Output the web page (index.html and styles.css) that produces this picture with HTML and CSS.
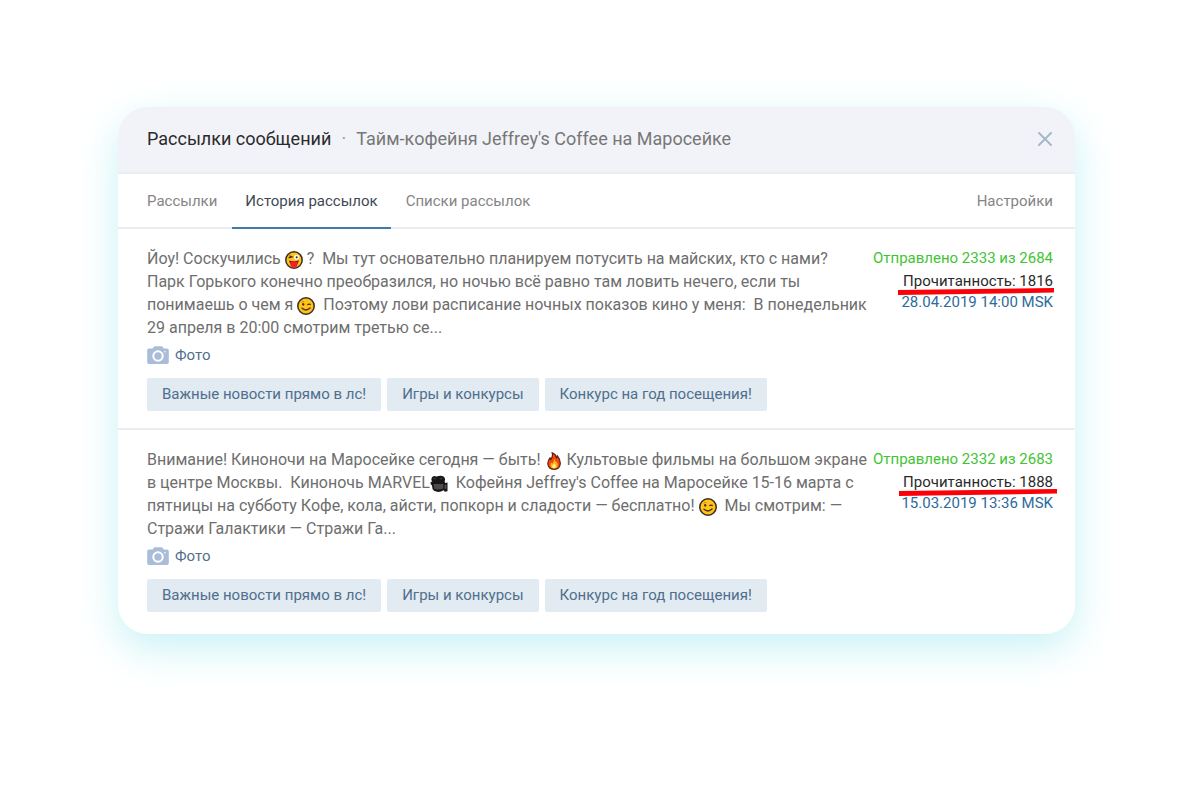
FILE: index.html
```html
<!DOCTYPE html>
<html lang="ru">
<head>
<meta charset="utf-8">
<title>Рассылки сообщений</title>
<link rel="stylesheet" href="styles.css">
</head>
<body>
<svg class="defs" aria-hidden="true">
  <symbol id="wink" viewBox="0 0 18 18">
    <circle cx="9" cy="9" r="8.2" fill="#ffc31a" stroke="#3b2f22" stroke-width="1.5"/>
    <path d="M4.6 5.200q1.200-1.200 2.600-.5" stroke="#c98a00" fill="none"/>
    <ellipse cx="6.200" cy="7.300" rx="1.100" ry="1.400" fill="#4a3210"/>
    <path d="M10.300 7.800q1.600-1.400 3.400-.2" stroke="#4a3210" stroke-width="1.300" fill="none"/>
    <path d="M5 11.300q4 3.400 8-.3" stroke="#4a3210" stroke-width="1.400" fill="none" stroke-linecap="round"/>
  </symbol>
  <symbol id="tongue" viewBox="0 0 18 18">
    <circle cx="9" cy="9" r="8.200" fill="#ffc31a" stroke="#3b2f22" stroke-width="1.500"/>
    <path d="M3.600 6.800l3.400-.9-2.600-1" stroke="#4a3210" stroke-width="1.200" fill="none"/>
    <circle cx="11.600" cy="6.200" r="2.500" fill="#fff"/>
    <circle cx="11.700" cy="6.300" r="1.100" fill="#4a3210"/>
    <path d="M4 9.500q5 1.600 10-.3-.6 3-2.300 4.200H6Q4.400 12 4 9.500z" fill="#5e2110"/>
    <path d="M5.300 10.800q3.700-1 7.200 0v3q-.6 2.900-3.500 2.900T5.300 13.800z" fill="#f3202b"/>
  </symbol>
  <symbol id="fire" viewBox="0 0 18 18">
    <path d="M7.200.8q3.600 1.400 4.300 5 .8-.6.900-1.800 3 3.600 2.900 7.500-.3 5.700-6.200 5.800-6-.2-6.300-5.800Q2.900 8.300 5 5.800l.7 1.700Q8.300 4.600 7.200.8z" fill="#f04a12" stroke="#5a2210" stroke-width="1.200"/>
    <path d="M9.300 6.500q.4 2.300 2.400 3.800 1.500 1.700 1 3.900-.9 2.200-3.600 2.300-3.200-.2-3.700-2.800-.1-1.900 1-3.200l.9 1.300q1.900-2.200 2-5.300z" fill="#ffb31a"/>
    <path d="M9.200 11.500q2.200 1.900 1.700 3.500-.8 1.300-1.900 1.200-1.700-.2-1.800-1.600.2-1.700 2-3.100z" fill="#fff27a"/>
  </symbol>
  <symbol id="movie" viewBox="0 0 18 18">
    <path d="M1.500 3.500Q2.500.6 5.500 1.200 7 1.800 8.500 1q3-.8 5 .6 2.300 1.700 1.200 4.400l.3 2 2.500-.5v8.800l-2.800.5-1-1.500q-5 3-9.700.5Q2 14 2 10.500L.6 9V7l1.700-.6Q1 5.300 1.500 3.500z" fill="#171717"/>
    <path d="M3.500 9h9.800v4.500q-4.500 2-9 .2z" fill="#4b4b4d"/>
    <path d="M3.300 3.600l1.500-1 1.400 1-1.400 1.200zM9.300 3.600l2-1 1.500 1-1.700 1.200z" fill="#38383a"/>
    <path d="M14.600 10l1.800-.5v4l-1.800.8z" fill="#555"/>
    <path d="M11 10.500l1.600-.3-.2 1.700z" fill="#e8261c"/>
  </symbol>
  <symbol id="camera" viewBox="0 0 22 18">
    <path d="M2 2.500h3.700L6.800.8Q7.200.2 8 .2h6.400q.8 0 1.200.6l1.100 1.700H20q1.800 0 1.800 1.800v11.900Q21.800 18 20 18H2Q.2 18 .2 16.200V4.300Q.2 2.500 2 2.500z" fill="#a9bdd9"/>
    <circle cx="11" cy="10" r="4.700" fill="none" stroke="#fff" stroke-width="2"/>
    <circle cx="18" cy="5.700" r=".8" fill="#fff"/>
  </symbol>
  <symbol id="marker" viewBox="0 0 156 7" preserveAspectRatio="none">
    <path d="M0 2L156 0v4.600L0 7z" fill="#fb0007"/>
  </symbol>
</svg>
<main class="card">
  <header class="head">
    <h1 class="title">Рассылки сообщений</h1>
    <span class="dot">·</span>
    <span class="group">Тайм-кофейня Jeffrey's Coffee на Маросейке</span>
    <button class="close" type="button" aria-label="Закрыть">
      <svg width="14" height="14" viewBox="0 0 14 14"><path d="M1 1l12 12M13 1L1 13" stroke="#a3b8cc" stroke-width="2" stroke-linecap="round"/></svg>
    </button>
  </header>
  <nav class="tabs">
    <a class="tab" href="#">Рассылки</a>
    <a class="tab active" href="#" aria-current="page">История рассылок</a>
    <a class="tab" href="#">Списки рассылок</a>
    <a class="tab settings" href="#">Настройки</a>
  </nav>
  <article class="entry">
    <div class="body">
      <p class="text">Йоу! Соскучились <svg class="emoji"><use href="#tongue"/></svg> ?&nbsp; Мы тут основательно планируем потусить на майских, кто с нами?<br>Парк Горького конечно преобразился, но ночью всё равно там ловить нечего, если ты<br>понимаешь о чем я <svg class="emoji"><use href="#wink"/></svg>&nbsp; Поэтому лови расписание ночных показов кино у меня:&nbsp; В понедельник<br>29 апреля в 20:00 смотрим третью се...</p>
      <a class="photo" href="#"><svg class="camera"><use href="#camera"/></svg>Фото</a>
      <div class="tags">
        <a class="tag" href="#">Важные новости прямо в лс!</a>
        <a class="tag" href="#">Игры и конкурсы</a>
        <a class="tag" href="#">Конкурс на год посещения!</a>
      </div>
    </div>
    <div class="stats">
      <div class="sent">Отправлено 2333 из 2684</div>
      <div class="read">Прочитанность: 1816<svg class="marker"><use href="#marker"/></svg></div>
      <time class="date">28.04.2019 14:00 MSK</time>
    </div>
  </article>
  <article class="entry">
    <div class="body">
      <p class="text">Внимание! Киноночи на Маросейке сегодня — быть! <svg class="emoji"><use href="#fire"/></svg> Культовые фильмы на большом экране<br>в центре Москвы.&nbsp; Киноночь MARVEL<svg class="emoji"><use href="#movie"/></svg>&nbsp; Кофейня Jeffrey's Coffee на Маросейке 15-16 марта с<br>пятницы на субботу Кофе, кола, айсти, попкорн и сладости — бесплатно! <svg class="emoji"><use href="#wink"/></svg>&nbsp; Мы смотрим: —<br>Стражи Галактики — Стражи Га...</p>
      <a class="photo" href="#"><svg class="camera"><use href="#camera"/></svg>Фото</a>
      <div class="tags">
        <a class="tag" href="#">Важные новости прямо в лс!</a>
        <a class="tag" href="#">Игры и конкурсы</a>
        <a class="tag" href="#">Конкурс на год посещения!</a>
      </div>
    </div>
    <div class="stats">
      <div class="sent">Отправлено 2332 из 2683</div>
      <div class="read">Прочитанность: 1888<svg class="marker wide"><use href="#marker"/></svg></div>
      <time class="date">15.03.2019 13:36 MSK</time>
    </div>
  </article>
</main>
</body>
</html>
```

FILE: styles.css
```css
* {
  box-sizing: border-box;
}

body {
  margin: 0;
  padding: 107px 125px 107px 118px;
  background: #fff;
  color: #6e6e6e;
  font: 15px/23px Roboto, "Liberation Sans", sans-serif;
}

a {
  color: inherit;
  text-decoration: none;
}

.defs {
  position: absolute;
  width: 0;
  height: 0;
}

.card {
  border-radius: 30px;
  background: #fff;
  box-shadow: 0 14px 40px #c8f2f5;
}

.head {
  display: flex;
  align-items: center;
  height: 67px;
  padding: 0 22px 2px 29px;
  border-bottom: 2px solid #ebedf2;
  border-radius: 30px 30px 0 0;
  background: #f2f3f8;
  font-size: 18px;
}

.title {
  margin: 0;
  color: #2a2a2a;
  font-size: 18px;
  font-weight: 400;
}

.dot {
  width: 25px;
  color: #999;
  text-align: center;
}

.group {
  color: #777;
}

.close {
  display: flex;
  margin-left: auto;
  padding: 1px;
  border: 0;
  background: none;
}

.tabs {
  display: flex;
  height: 55px;
  padding: 0 10px 0 17px;
  border-bottom: 2px solid #ebedf2;
}

.tab {
  height: 55px;
  margin-right: 3px;
  padding: 16px 12px 0;
  color: #858585;
}

.tab.active {
  padding: 16px 13px 0;
  border-bottom: 2px solid #3f7da8;
  color: #3f4954;
}

.tab.settings {
  margin: 0 0 0 auto;
}

.entry {
  display: flex;
  justify-content: space-between;
  padding: 18px 22px 17px 29px;
}

.entry:last-child {
  padding-bottom: 22px;
}

.entry + .entry {
  border-top: 2px solid #ebedf2;
}

.text {
  margin: 0;
  font-size: 16px;
  white-space: nowrap;
}

.emoji {
  width: 18px;
  height: 18px;
  margin: -2px 0;
  vertical-align: -3px;
}

.photo {
  display: flex;
  align-items: center;
  gap: 6px;
  height: 32px;
  color: #4f6f8d;
}

.camera {
  width: 22px;
  height: 18px;
}

.tags {
  display: flex;
  gap: 6px;
  margin-top: 7px;
}

.tag {
  padding: 5px 15px;
  border-radius: 2px;
  background: #e2eaf2;
  color: #4f6f8d;
  white-space: nowrap;
}

.stats {
  text-align: right;
  white-space: nowrap;
}

.sent {
  color: #3fc433;
}

.read {
  position: relative;
  color: #2a2a2a;
}

.marker {
  position: absolute;
  right: -1px;
  bottom: -2px;
  width: 156px;
  height: 7px;
}

.marker.wide {
  right: -4px;
  width: 158px;
}

.date {
  display: block;
  color: #2f6a9a;
  line-height: 18px;
}
```
